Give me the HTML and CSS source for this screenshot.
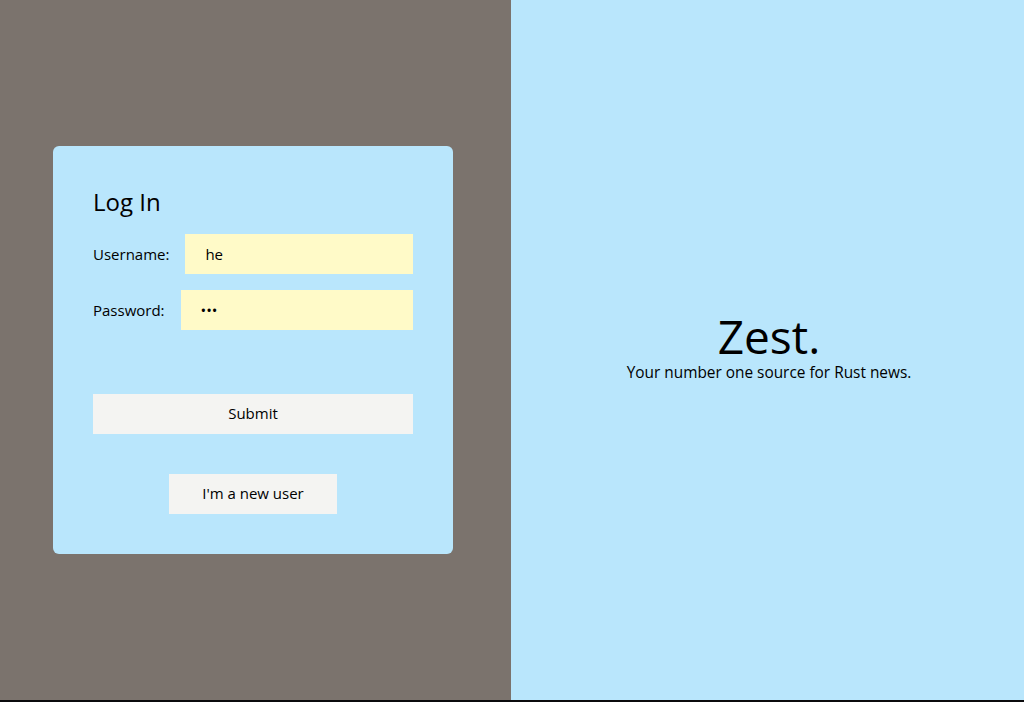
FILE: index.html
```html
<!DOCTYPE html>
<html>
<head>
<meta charset="utf-8">
<link rel="stylesheet" href="styles.css">
</head>
<body>
<main class="page">
  <section class="left">
    <form class="card">
      <h2 class="title">Log In</h2>
      <div class="row">
        <label class="label">Username:</label>
        <input class="field" type="text" value="he">
      </div>
      <div class="row">
        <label class="label">Password:</label>
        <input class="field" type="password" value="abc">
      </div>
      <button class="btn btn-submit" type="button">Submit</button>
      <button class="btn btn-new" type="button">I'm a new user</button>
    </form>
  </section>
  <section class="right">
    <div class="brand">
      <h1 class="logo">Zest.</h1>
      <p class="tagline">Your number one source for Rust news.</p>
    </div>
  </section>
</main>
</body>
</html>
```
FILE: styles.css
```css
html, body {
  margin: 0;
  padding: 0;
  background: #0b0b0d;
  font-family: "Open Sans", "Noto Sans", sans-serif;
  color: #000;
}
.page {
  display: flex;
  height: 700px;
}
.left {
  width: 511px;
  background: #7b736d;
  display: flex;
  align-items: center;
  justify-content: center;
}
.right {
  flex: 1;
  background: #b9e6fc;
  display: flex;
  align-items: center;
  justify-content: center;
}
.card {
  box-sizing: border-box;
  width: 400px;
  height: 408px;
  margin-left: -5px;
  padding: 40px;
  background: #b9e6fc;
  border-radius: 6px;
  display: flex;
  flex-direction: column;
}
.title {
  margin: 0 0 16px;
  font-size: 24px;
  font-weight: 400;
  line-height: 31px;
  height: 32px;
}
.row {
  display: flex;
  align-items: center;
  height: 40px;
  margin-bottom: 16px;
}
.label {
  font-size: 15px;
  margin-right: 16px;
  white-space: nowrap;
}
.field {
  flex: 1;
  min-width: 0;
  height: 40px;
  box-sizing: border-box;
  border: none;
  outline: none;
  background: #fffac8;
  padding: 0 20px;
  font-family: inherit;
  font-size: 15px;
  color: #000;
}
.btn {
  height: 40px;
  border: none;
  background: #f4f4f2;
  font-family: inherit;
  font-size: 15px;
  color: #000;
  padding: 0 0 2px;
}
.btn-submit {
  margin-top: 48px;
  width: 100%;
}
.btn-new {
  margin-top: 40px;
  align-self: center;
  width: 168px;
}
.brand {
  text-align: center;
  padding-bottom: 9px;
  margin-left: 3px;
}
.logo {
  margin: 0;
  font-size: 46px;
  font-weight: 400;
  line-height: 54px;
}
.tagline {
  margin: 0;
  font-size: 15.4px;
  line-height: 20px;
}
```
